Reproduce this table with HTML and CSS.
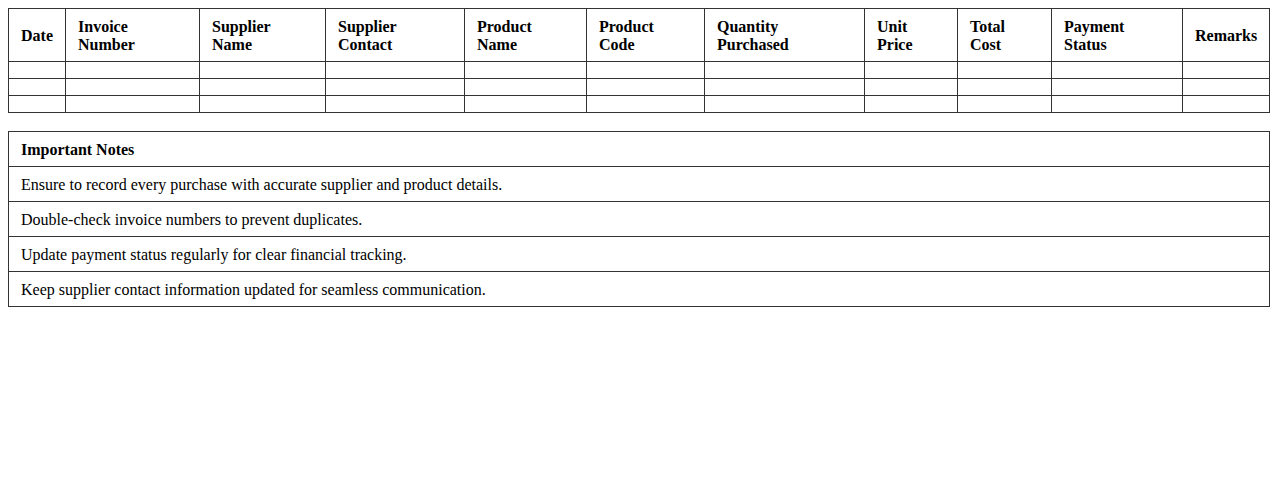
FILE: index.html
```html
<!DOCTYPE html>
<html>
<head>
<meta charset="utf-8">
<link rel="stylesheet" href="styles.css">
</head>
<body>
<table class="log">
  <colgroup>
    <col class="c-date">
    <col class="c-inv">
    <col class="c-sname">
    <col class="c-scont">
    <col class="c-pname">
    <col class="c-pcode">
    <col class="c-qty">
    <col class="c-unit">
    <col class="c-total">
    <col class="c-pay">
    <col class="c-rem">
  </colgroup>
  <thead>
    <tr>
      <th>Date</th>
      <th>Invoice<br>Number</th>
      <th>Supplier<br>Name</th>
      <th>Supplier<br>Contact</th>
      <th>Product<br>Name</th>
      <th>Product<br>Code</th>
      <th>Quantity<br>Purchased</th>
      <th>Unit<br>Price</th>
      <th>Total<br>Cost</th>
      <th>Payment<br>Status</th>
      <th>Remarks</th>
    </tr>
  </thead>
  <tbody>
    <tr><td></td><td></td><td></td><td></td><td></td><td></td><td></td><td></td><td></td><td></td><td></td></tr>
    <tr><td></td><td></td><td></td><td></td><td></td><td></td><td></td><td></td><td></td><td></td><td></td></tr>
    <tr><td></td><td></td><td></td><td></td><td></td><td></td><td></td><td></td><td></td><td></td><td></td></tr>
  </tbody>
</table>
<table class="notes">
  <tr><th>Important Notes</th></tr>
  <tr><td>Ensure to record every purchase with accurate supplier and product details.</td></tr>
  <tr><td>Double-check invoice numbers to prevent duplicates.</td></tr>
  <tr><td>Update payment status regularly for clear financial tracking.</td></tr>
  <tr><td>Keep supplier contact information updated for seamless communication.</td></tr>
</table>
</body>
</html>
```
FILE: styles.css
```css
body {
  margin: 8px;
  font-family: "Liberation Serif", "Times New Roman", serif;
  font-size: 16px;
  color: #000;
  background: #fff;
}
table {
  width: 100%;
  border-collapse: collapse;
}
th, td {
  border: 1px solid #333;
  padding: 9px 12px 7px;
  text-align: left;
  line-height: 18px;
}
.log td {
  padding: 8px 12px;
}
.log {
  table-layout: fixed;
  margin-bottom: 18px;
}
.log th {
  font-weight: bold;
}
.c-date { width: 57px; }
.c-inv { width: 134px; }
.c-sname { width: 126px; }
.c-scont { width: 139px; }
.c-pname { width: 122px; }
.c-pcode { width: 118px; }
.c-qty { width: 160px; }
.c-unit { width: 93px; }
.c-total { width: 94px; }
.c-pay { width: 131px; }
.c-rem { width: 87px; }
.notes th {
  font-weight: bold;
}
```
